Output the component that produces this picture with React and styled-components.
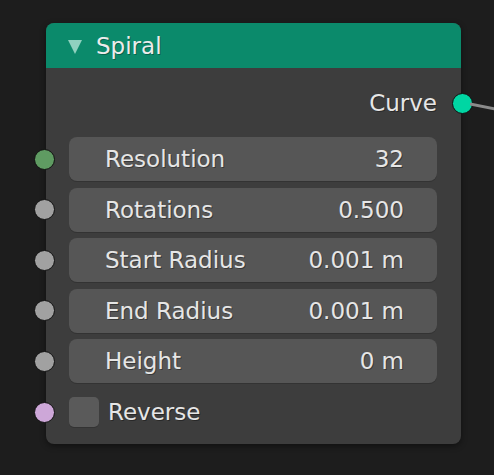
import React from "react"
import styled, { createGlobalStyle } from "styled-components"

const GlobalStyle = createGlobalStyle`
    html, body {
        margin: 0;
        padding: 0;
        background: #1d1d1d;
    }
    body {
        font-family: "DejaVu Sans", "Liberation Sans", sans-serif;
    }
`

// Components

const Canvas = styled.div`
    position: relative;
    width: 494px;
    height: 475px;
    padding: 23px 0 0 46px;
    box-sizing: border-box;
    overflow: hidden;
`

const Link = styled.svg`
    position: absolute;
    left: 470px;
    top: 95px;
`

const Node = styled.div`
    position: relative;
    width: 415px;
    height: 421px;
    background: #3d3d3d;
    border-radius: 8px;
    box-shadow: 0 2px 6px rgba(0, 0, 0, 0.45);
    display: flex;
    flex-direction: column;
`

const Header = styled.div`
    height: 45px;
    background: #0b8a6b;
    border-radius: 8px 8px 0 0;
    display: flex;
    align-items: center;
    gap: 14px;
    padding-left: 22px;
    color: #ececec;
    font-size: 23px;
    text-shadow: 1px 1px 0 rgba(0, 0, 0, 0.3);
`

const Collapse = styled.span`
    width: 0;
    height: 0;
    border-left: 7.5px solid transparent;
    border-right: 7.5px solid transparent;
    border-top: 14px solid #8fd1bf;
    margin-top: 2px;
`

const Body = styled.div`
    display: flex;
    flex-direction: column;
    padding: 13px 0 17px;
`

const Row = styled.div`
    position: relative;
    display: flex;
    align-items: center;
    justify-content: ${props => props.output ? "flex-end" : "flex-start"};
    height: ${props => props.h || 44}px;
    margin-top: ${props => props.gap || 0}px;
    padding: 0 24px 0 23px;
    color: #e6e6e6;
    font-size: 23px;
    text-shadow: 1px 1px 0 rgba(0, 0, 0, 0.35);
`

const Socket = styled.span`
    position: absolute;
    top: 50%;
    ${props => props.output ? "right: -12px;" : "left: -12px;"}
    width: 19px;
    height: 19px;
    margin-top: -10.5px;
    border-radius: 50%;
    background: ${props => props.color};
    border: 1px solid #111;
`

const Field = styled.div`
    flex: 1;
    height: 44px;
    display: flex;
    align-items: center;
    justify-content: space-between;
    padding: 0 33px 0 36px;
    background: #565656;
    border-radius: 8px;
    box-shadow: 0 1px 0 #333;
`

const Check = styled.span`
    width: 30px;
    height: 30px;
    border-radius: 5px;
    background: #5a5a5a;
    box-shadow: 0 1px 0 #333;
    margin-right: 9px;
`

const inputs = [
    { label: "Resolution", value: "32", color: "#5f9b62" },
    { label: "Rotations", value: "0.500", color: "#a1a1a1" },
    { label: "Start Radius", value: "0.001 m", color: "#a1a1a1" },
    { label: "End Radius", value: "0.001 m", color: "#a1a1a1" },
    { label: "Height", value: "0 m", color: "#a1a1a1" },
]

const App = () => {
    return (
        <>
            <GlobalStyle />
            <Canvas>
                <Node>
                    <Header>
                        <Collapse />
                        Spiral
                    </Header>
                    <Body>
                        <Row output>
                            Curve
                            <Socket output color="#00d6a3" />
                        </Row>
                        {inputs.map((item, i) => (
                            <Row key={item.label} gap={i === 0 ? 12 : 6.5}>
                                <Socket color={item.color} />
                                <Field>
                                    <span>{item.label}</span>
                                    <span>{item.value}</span>
                                </Field>
                            </Row>
                        ))}
                        <Row h={30} gap={14}>
                            <Socket color="#cda7d8" />
                            <Check />
                            Reverse
                        </Row>
                    </Body>
                </Node>
                <Link width="30" height="20">
                    <line x1="0" y1="9" x2="30" y2="15" stroke="#8a8a8a" strokeWidth="3" />
                </Link>
            </Canvas>
        </>
    )
}

export default App
